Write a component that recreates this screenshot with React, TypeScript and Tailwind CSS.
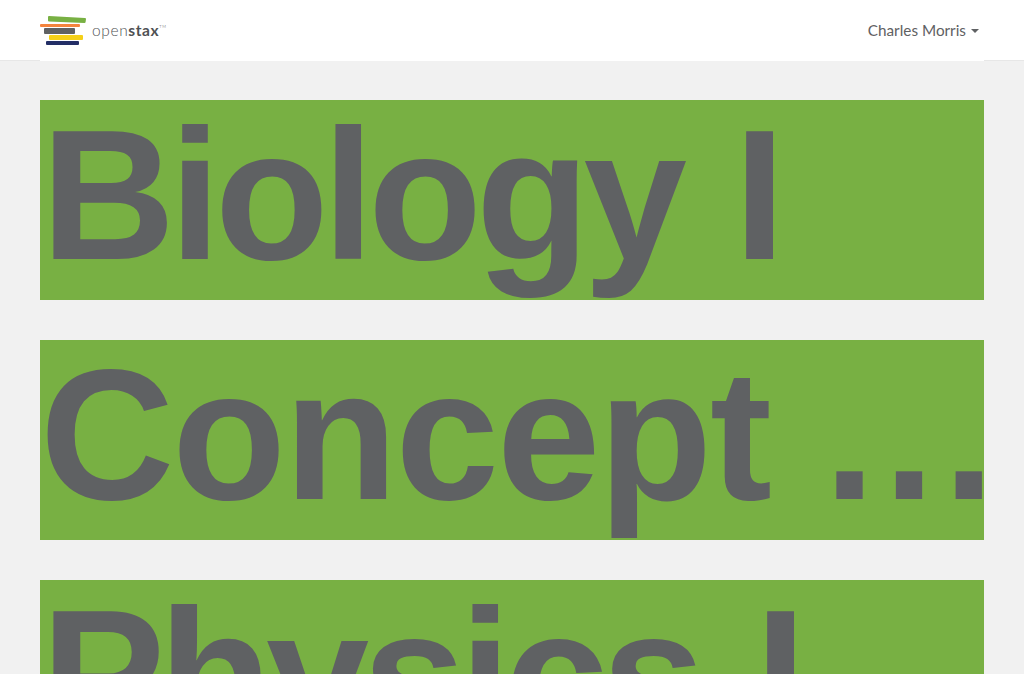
const courses = [
  { name: 'Biology I', style: 'pl-[1px] tracking-[-6px] [word-spacing:7px]' },
  { name: 'Concept', dots: '...', style: 'pl-0 tracking-[-2px] [word-spacing:4px]' },
  { name: 'Physics I', style: 'pl-[1px] tracking-[-6.5px] [word-spacing:11px]' },
]

function Logo() {
  return (
    <svg width="46" height="31" viewBox="0 0 46 31" className="block">
      <path d="M9 1 L45 3 Q46 3 46 4 L45.6 7 Q45.5 8 44.5 8 L9 6.5 Q8 6.5 8 5.5 L8 2 Q8 1 9 1 Z" fill="#78b043" />
      <rect x="0" y="9" width="40" height="3" rx="1" fill="#f4843d" />
      <rect x="4" y="13" width="31" height="6" rx="1" fill="#5f6163" />
      <rect x="9" y="20" width="34" height="5" rx="1" fill="#f4d019" />
      <rect x="6" y="26" width="33" height="4" rx="1" fill="#232e66" />
    </svg>
  )
}

export default function App() {
  return (
    <div className="h-[674px] overflow-hidden bg-[#f1f1f1] font-['Lato',sans-serif]">
      <header className="h-[61px] bg-white border-b border-[#e7e7e7]">
        {/* inner bar covers the header border between the gutters */}
        <div className="mx-10 h-[61px] bg-white flex items-center justify-between">
          <div className="flex items-center gap-[6px]">
            <Logo />
            <span className="text-[15.5px] font-light text-[#4f5153] tracking-[0.04em]">
              open<b className="font-bold">stax</b>
              <sup className="text-[4px] align-super">TM</sup>
            </span>
          </div>
          <div className="flex items-center gap-1 pr-[5px] text-[15.3px] text-[#5f6163]">
            Charles Morris
            <span className="ml-[1px] w-0 h-0 border-x-4 border-x-transparent border-t-4 border-t-[#5f6163]" />
          </div>
        </div>
      </header>
      <main className="mx-10 pt-[39px] flex flex-col gap-10">
        {courses.map((c) => (
          <div
            key={c.name}
            className={`h-[200px] shrink-0 bg-[#78b043] overflow-hidden text-[#5f6163] font-['Liberation_Sans',sans-serif] font-bold text-[186px] leading-[190px] whitespace-nowrap ${c.style}`}
          >
            {c.name}
            {c.dots && ' '}
            {c.dots && <span className="tracking-[8px]">{c.dots}</span>}
          </div>
        ))}
      </main>
    </div>
  )
}
